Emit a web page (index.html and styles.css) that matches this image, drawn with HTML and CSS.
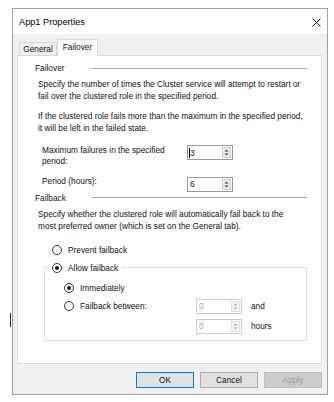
FILE: index.html
```html
<!DOCTYPE html>
<html>
<head>
<meta charset="utf-8">
<title>App1 Properties</title>
<link rel="stylesheet" href="styles.css">
</head>
<body>
<div class="window">
  <div class="titlebar">
    <span class="title">App1 Properties</span>
    <svg class="close" width="9" height="9" viewBox="0 0 9 9"><path d="M0.5 0.5L8.5 8.5M8.5 0.5L0.5 8.5" stroke="#222" stroke-width="1" fill="none"/></svg>
  </div>
  <div class="client">
    <div class="tabs">
      <div class="tab">General</div>
      <div class="tab active">Failover</div>
    </div>
    <div class="panel">
      <div class="group-head"><span>Failover</span><span class="rule"></span></div>
      <p class="desc">Specify the number of times the Cluster service will attempt to restart or<br>fail over the clustered role in the specified period.</p>
      <p class="desc gap">If the clustered role fails more than the maximum in the specified period,<br>it will be left in the failed state.</p>
      <div class="field-row first">
        <div class="field-label">Maximum failures in the specified<br>period:</div>
        <div class="spin"><span class="val"><i class="caret"></i>3</span><span class="spinbtn"><svg width="7" height="11" viewBox="0 0 7 11"><path d="M1.5 4.5L3.5 2.5L5.5 4.5Z M1.5 6.5L3.5 8.5L5.5 6.5Z" fill="#444"/></svg></span></div>
      </div>
      <div class="field-row second">
        <div class="field-label">Period (hours):</div>
        <div class="spin"><span class="val">6</span><span class="spinbtn"><svg width="7" height="11" viewBox="0 0 7 11"><path d="M1.5 4.5L3.5 2.5L5.5 4.5Z M1.5 6.5L3.5 8.5L5.5 6.5Z" fill="#444"/></svg></span></div>
      </div>
      <div class="group-head fb"><span>Failback</span><span class="rule"></span></div>
      <p class="desc">Specify whether the clustered role will automatically fail back to the<br>most preferred owner (which is set on the General tab).</p>
      <div class="option prevent"><span class="radio"></span><span>Prevent failback</span></div>
      <fieldset class="allow">
        <legend><span class="option"><span class="radio on"></span><span>Allow failback</span></span></legend>
        <div class="option sub"><span class="radio on"></span><span>Immediately</span></div>
        <div class="between">
          <div class="option"><span class="radio"></span><span>Failback between:</span></div>
          <div class="spin off"><span class="val">0</span><span class="spinbtn"><svg width="7" height="11" viewBox="0 0 7 11"><path d="M1.5 4.5L3.5 2.5L5.5 4.5Z M1.5 6.5L3.5 8.5L5.5 6.5Z" fill="#aaa"/></svg></span></div>
          <span class="unit">and</span>
          <span></span>
          <div class="spin off"><span class="val">0</span><span class="spinbtn"><svg width="7" height="11" viewBox="0 0 7 11"><path d="M1.5 4.5L3.5 2.5L5.5 4.5Z M1.5 6.5L3.5 8.5L5.5 6.5Z" fill="#aaa"/></svg></span></div>
          <span class="unit">hours</span>
        </div>
      </fieldset>
    </div>
    <div class="buttons">
      <button class="btn default">OK</button>
      <button class="btn">Cancel</button>
      <button class="btn disabled">Apply</button>
    </div>
  </div>
</div>
<div class="cursor-mark"></div>
</body>
</html>
```
FILE: styles.css
```css
* { box-sizing: border-box; }
html, body { margin: 0; padding: 0; }
body {
  width: 334px;
  height: 402px;
  background: #fff;
  font-family: "Liberation Sans", Arial, sans-serif;
  font-size: 8.3px;
  color: #111;
  position: relative;
  overflow: hidden;
}
.window {
  margin: 8px 0 0 12px;
  width: 316px;
  height: 387px;
  border: 1px solid #a0a0a0;
  background: #f0f0f0;
  display: flex;
  flex-direction: column;
}
.titlebar {
  height: 25px;
  flex: none;
  background: #fff;
  display: flex;
  align-items: center;
  justify-content: space-between;
  padding: 1px 6px 0 6px;
}
.title { font-size: 9.2px; color: #000; }
.client {
  flex: 1;
  display: flex;
  flex-direction: column;
  padding: 5px 5px 0 4px;
}
.tabs {
  display: flex;
  align-items: flex-end;
  padding-left: 2px;
}
.tab {
  height: 13px;
  width: 38px;
  border: 1px solid #d9d9d9;
  border-bottom: none;
  background: #f0f0f0;
  line-height: 12px;
  text-align: center;
}
.tab.active {
  position: relative;
  z-index: 1;
  height: 17px;
  width: 41px;
  margin-bottom: -1px;
  background: #fff;
  line-height: 14px;
}
.panel {
  height: 309px;
  border: 1px solid #d9d9d9;
  background: #fff;
  padding: 0 14px 0 17px;
}
.group-head {
  margin-top: 6px;
  height: 12px;
  line-height: 12px;
  display: flex;
  align-items: center;
}
.group-head.fb { margin-top: 0; }
.rule {
  flex: 1;
  height: 1px;
  background: #a8a8a8;
  margin-left: 26px;
}
.desc {
  margin: 4px 0 0 3px;
  line-height: 12px;
}
.desc.gap { margin-top: 8px; }
.field-row {
  display: flex;
  align-items: flex-start;
  margin-left: 7px;
}
.field-row.first { margin-top: 10px; }
.field-row.second { margin-top: 8px; }
.field-label {
  width: 145px;
  line-height: 11.5px;
  padding-top: 0.5px;
}
.field-row .spin { margin-top: 1px; }
.spin {
  width: 46px;
  height: 15px;
  border: 1px solid #9a9a9a;
  background: #fff;
  display: flex;
  align-items: center;
  padding: 0 1px 0 1px;
}
.val {
  flex: 1;
  display: flex;
  align-items: center;
  line-height: 12px;
  padding-left: 1px;
}
.caret {
  width: 1px;
  height: 10px;
  background: #000;
  margin-left: -1px;
}
.spinbtn {
  width: 9px;
  height: 11px;
  border: 1px solid #cfcfcf;
  background: #ededed;
  display: flex;
  align-items: center;
  justify-content: center;
}
.spin.off { border-color: #cccccc; }
.spin.off .val { color: #a0a0a0; }
.spin.off .spinbtn { border-color: #e0e0e0; background: #f4f4f4; }
.option {
  display: flex;
  align-items: center;
  gap: 6px;
  line-height: 12px;
  height: 12px;
}
.radio {
  width: 10px;
  height: 10px;
  flex: none;
  border: 1px solid #333;
  border-radius: 50%;
  background: #fff;
  display: flex;
  align-items: center;
  justify-content: center;
}
.radio.on::after {
  content: "";
  width: 4px;
  height: 4px;
  border-radius: 50%;
  background: #1a1a1a;
}
.prevent {
  margin: 12px 0 0 17px;
}
fieldset.allow {
  margin: 6px 0 0 9px;
  width: 263px;
  border: 1px solid #dcdcdc;
  padding: 0 0 6px 6px;
  min-width: 0;
}
fieldset.allow legend {
  padding: 0 4px 0 1px;
  line-height: 12px;
}
.sub {
  margin: 8px 0 0 13px;
}
.between {
  margin: 5px 0 0 13px;
  display: grid;
  grid-template-columns: 123px 46px auto;
  grid-auto-rows: 15px;
  row-gap: 5px;
  column-gap: 9px;
  align-items: center;
}
.unit { line-height: 12px; }
.buttons {
  margin-top: 8px;
  display: flex;
  justify-content: flex-end;
  gap: 6px;
}
.btn {
  width: 58px;
  height: 16px;
  padding: 0;
  margin: 0;
  border: 1px solid #adadad;
  background: #e1e1e1;
  font-family: "Liberation Sans", Arial, sans-serif;
  font-size: 8.3px;
  color: #111;
  line-height: 14px;
}
.btn.default { border-color: #0078d7; }
.btn.disabled {
  background: #cccccc;
  border-color: #bfbfbf;
  color: #9a9a9a;
}
.cursor-mark {
  position: absolute;
  left: 10px;
  top: 313px;
  width: 1px;
  height: 14px;
  background: #333;
}
```
